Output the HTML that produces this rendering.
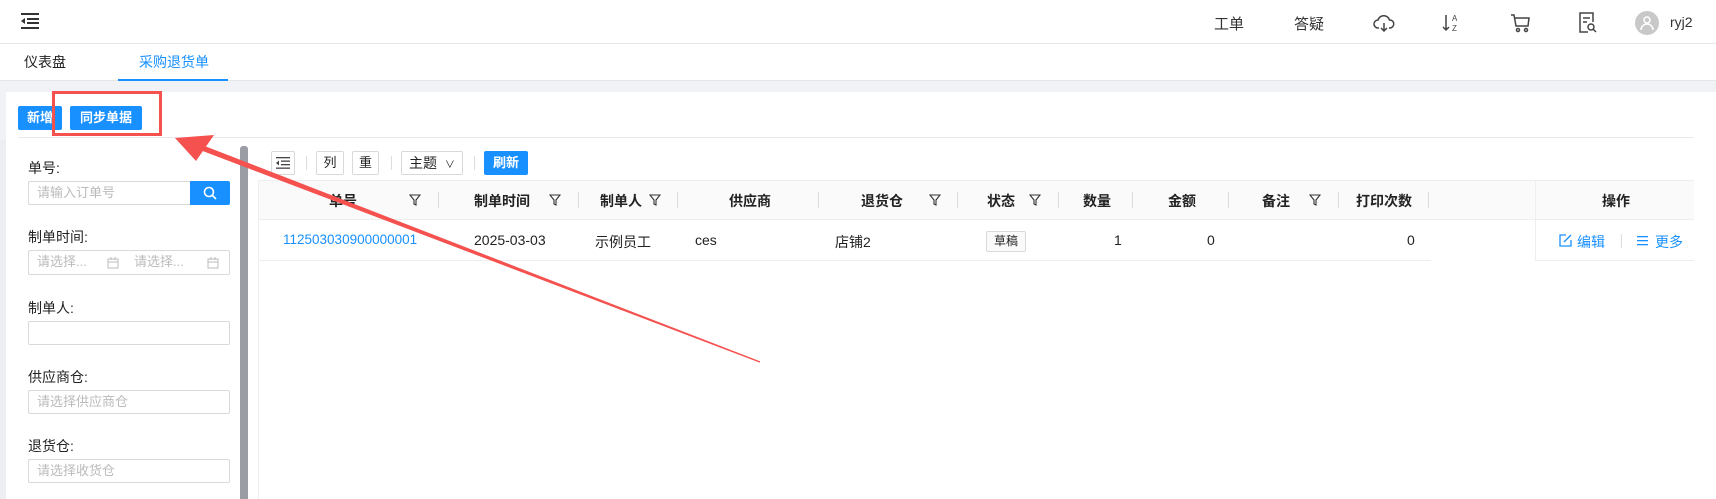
<!DOCTYPE html>
<html><head><meta charset="utf-8"><style>
*{box-sizing:border-box;margin:0;padding:0}
body{width:1716px;height:499px;overflow:hidden;background:#f0f2f5;font-family:"Liberation Sans","Noto Sans CJK SC",sans-serif;font-size:14px;color:#222;position:relative}
.a{position:absolute}
.hdr{left:0;top:0;width:1716px;height:43px;background:#fff;box-shadow:0 1px 3px rgba(0,0,0,.08)}
.tabs{left:0;top:44px;width:1716px;height:37px;background:#fff;border-bottom:1px solid #e4e6ea}
.panel{left:6px;top:92px;width:1710px;height:407px;background:#fff}
.btn{position:absolute;background:#1890ff;color:#fff;font-size:13px;font-weight:bold;text-align:center;line-height:24px;border-radius:2px}
.lbl{position:absolute;left:28px;font-size:14px;color:#222}
.inp{position:absolute;left:28px;width:202px;height:24px;border:1px solid #d9d9d9;border-radius:2px;color:#bbb;font-size:13px;line-height:22px;padding-left:8px}
.tb{position:absolute;top:151px;height:24px;border:1px solid #d9d9d9;border-radius:2px;font-size:13px;text-align:center;line-height:22px;background:#fff}
.sep{position:absolute;width:1px;background:#ddd}
.th{position:absolute;top:191px;font-weight:bold;font-size:14px}
.td{position:absolute;top:232px;font-size:14px}
.fl{position:absolute;top:194px}
</style></head><body>
<div class="a hdr"></div>
<svg class="a" style="left:21px;top:13px" width="19" height="16" viewBox="0 0 19 16"><g fill="#333"><rect x="0" y="0" width="18" height="2"/><rect x="6" y="5" width="12" height="2"/><rect x="6" y="9" width="12" height="2"/><rect x="0" y="14" width="18" height="2"/><path d="M4 5 L0 8 L4 11Z"/></g></svg>
<div class="a" style="left:1214px;top:13px;font-size:15px;color:#333">工单</div>
<div class="a" style="left:1294px;top:13px;font-size:15px;color:#333">答疑</div>
<svg class="a" style="left:1373px;top:15px" width="22" height="17" viewBox="0 0 22 17" fill="none" stroke="#444" stroke-width="1.5"><path d="M6 13H5a4 4 0 0 1 0-8 6 6 0 0 1 11.5 0A4 4 0 0 1 17 13h-1"/><path d="M11 8v8M8 13l3 3 3-3"/></svg>
<svg class="a" style="left:1442px;top:13px" width="20" height="20" viewBox="0 0 20 20"><path d="M4 2v15M1 14l3 3 3-3" stroke="#444" stroke-width="1.5" fill="none"/><text x="10" y="8" font-size="8" font-family="Liberation Sans" fill="#444">A</text><text x="10" y="18" font-size="8" font-family="Liberation Sans" fill="#444">Z</text></svg>
<svg class="a" style="left:1510px;top:14px" width="21" height="19" viewBox="0 0 21 19" fill="none" stroke="#444" stroke-width="1.5"><path d="M1 1h3l2 11h12l1-8H5"/><circle cx="8" cy="16" r="1.5"/><circle cx="16" cy="16" r="1.5"/></svg>
<svg class="a" style="left:1578px;top:12px" width="20" height="22" viewBox="0 0 20 22" fill="none" stroke="#444" stroke-width="1.5"><path d="M10 20H2V1h13v9"/><path d="M5 6h7M5 10h4"/><circle cx="13" cy="15" r="3"/><path d="M15 17l3 3"/></svg>
<div class="a" style="left:1635px;top:11px;width:24px;height:24px;border-radius:50%;background:#c8c8c8"></div>
<svg class="a" style="left:1640px;top:15px" width="14" height="16" viewBox="0 0 14 16" fill="none" stroke="#fff" stroke-width="1.5"><circle cx="7" cy="5" r="3"/><path d="M1 15a6 6 0 0 1 12 0"/></svg>
<div class="a" style="left:1670px;top:14px;font-size:14px;color:#333">ryj2</div>

<div class="a tabs"></div>
<div class="a" style="left:24px;top:52px;font-size:14px;color:#222">仪表盘</div>
<div class="a" style="left:139px;top:52px;font-size:14px;color:#1890ff">采购退货单</div>
<div class="a" style="left:118px;top:79px;width:110px;height:2px;background:#1890ff"></div>

<div class="a panel"></div>
<div class="btn" style="left:18px;top:106px;width:44px">新增</div>
<div class="btn" style="left:70px;top:106px;width:72px">同步单据</div>
<div class="a" style="left:18px;top:137px;width:1676px;height:1px;background:#e8e8e8"></div>
<div class="a" style="left:0;top:140px;width:6px;height:359px;background:#eceef2"></div>

<div class="lbl" style="top:158px">单号:</div>
<div class="inp" style="top:181px;width:163px">请输入订单号</div>
<div class="a" style="left:190px;top:181px;width:40px;height:24px;background:#1890ff;border-radius:0 2px 2px 0"></div>
<svg class="a" style="left:203px;top:186px" width="14" height="14" viewBox="0 0 14 14" fill="none" stroke="#fff" stroke-width="1.6"><circle cx="6" cy="6" r="4.5"/><path d="M9.5 9.5L13 13"/></svg>
<div class="lbl" style="top:227px">制单时间:</div>
<div class="inp" style="top:250px;height:25px"><span style="position:absolute;left:8px">请选择...</span><span style="position:absolute;left:105px">请选择...</span>
<svg style="position:absolute;left:78px;top:6px" width="12" height="12" viewBox="0 0 12 12" fill="none" stroke="#bbb"><rect x="1" y="2" width="10" height="9"/><path d="M1 5h10M4 0v3M8 0v3"/></svg>
<svg style="position:absolute;left:178px;top:6px" width="12" height="12" viewBox="0 0 12 12" fill="none" stroke="#bbb"><rect x="1" y="2" width="10" height="9"/><path d="M1 5h10M4 0v3M8 0v3"/></svg></div>
<div class="lbl" style="top:298px">制单人:</div>
<div class="inp" style="top:321px"></div>
<div class="lbl" style="top:367px">供应商仓:</div>
<div class="inp" style="top:390px">请选择供应商仓</div>
<div class="lbl" style="top:436px">退货仓:</div>
<div class="inp" style="top:459px">请选择收货仓</div>
<div class="a" style="left:240px;top:146px;width:8px;height:353px;background:#9a9da3;border-radius:3px 3px 0 0"></div>

<div class="tb" style="left:271px;width:24px"><svg width="14" height="12" viewBox="0 0 14 12" style="margin-top:5px"><g fill="#444"><rect x="0" y="0" width="14" height="1.3"/><rect x="5" y="3.5" width="9" height="1.3"/><rect x="5" y="7" width="9" height="1.3"/><rect x="0" y="10.5" width="14" height="1.3"/><path d="M3 3.5L0 6l3 2.5Z"/></g></svg></div>
<div class="sep" style="left:306px;top:156px;height:14px"></div>
<div class="tb" style="left:316px;width:28px">列</div>
<div class="tb" style="left:352px;width:27px">重</div>
<div class="sep" style="left:391px;top:156px;height:14px"></div>
<div class="tb" style="left:401px;width:62px;text-align:left;padding-left:7px;font-size:14px">主题 <span style="font-size:10px;margin-left:4px">&#8744;</span></div>
<div class="sep" style="left:474px;top:156px;height:14px"></div>
<div class="btn" style="left:484px;top:151px;width:44px">刷新</div>

<div class="a" style="left:258px;top:180px;width:1px;height:319px;background:#eee"></div>
<div class="a" style="left:259px;top:180px;width:1435px;height:40px;background:#fafafa;border-top:1px solid #eee;border-bottom:1px solid #eee"></div>
<div class="a" style="left:259px;top:260px;width:1172px;height:1px;background:#eee"></div>
<div class="a" style="left:1535px;top:180px;width:1px;height:81px;background:#eee"></div>
<div class="a" style="left:1536px;top:260px;width:158px;height:1px;background:#eee"></div>

<div class="th" style="left:329px">单号</div>
<div class="th" style="left:474px">制单时间</div>
<div class="th" style="left:600px">制单人</div>
<div class="th" style="left:729px">供应商</div>
<div class="th" style="left:861px">退货仓</div>
<div class="th" style="left:987px">状态</div>
<div class="th" style="left:1083px">数量</div>
<div class="th" style="left:1168px">金额</div>
<div class="th" style="left:1262px">备注</div>
<div class="th" style="left:1356px">打印次数</div>
<div class="th" style="left:1602px">操作</div>
<svg class="fl" style="left:409px" width="12" height="12" viewBox="0 0 12 12"><path d="M1 1h10L7 6v5L5 10V6Z" fill="none" stroke="#333" stroke-width="1.1"/></svg>
<svg class="fl" style="left:549px" width="12" height="12" viewBox="0 0 12 12"><path d="M1 1h10L7 6v5L5 10V6Z" fill="none" stroke="#333" stroke-width="1.1"/></svg>
<svg class="fl" style="left:649px" width="12" height="12" viewBox="0 0 12 12"><path d="M1 1h10L7 6v5L5 10V6Z" fill="none" stroke="#333" stroke-width="1.1"/></svg>
<svg class="fl" style="left:929px" width="12" height="12" viewBox="0 0 12 12"><path d="M1 1h10L7 6v5L5 10V6Z" fill="none" stroke="#333" stroke-width="1.1"/></svg>
<svg class="fl" style="left:1029px" width="12" height="12" viewBox="0 0 12 12"><path d="M1 1h10L7 6v5L5 10V6Z" fill="none" stroke="#333" stroke-width="1.1"/></svg>
<svg class="fl" style="left:1309px" width="12" height="12" viewBox="0 0 12 12"><path d="M1 1h10L7 6v5L5 10V6Z" fill="none" stroke="#333" stroke-width="1.1"/></svg>
<div class="sep" style="left:438px;top:192px;height:16px"></div>
<div class="sep" style="left:578px;top:192px;height:16px"></div>
<div class="sep" style="left:677px;top:192px;height:16px"></div>
<div class="sep" style="left:818px;top:192px;height:16px"></div>
<div class="sep" style="left:957px;top:192px;height:16px"></div>
<div class="sep" style="left:1058px;top:192px;height:16px"></div>
<div class="sep" style="left:1132px;top:192px;height:16px"></div>
<div class="sep" style="left:1228px;top:192px;height:16px"></div>
<div class="sep" style="left:1338px;top:192px;height:16px"></div>
<div class="sep" style="left:1428px;top:192px;height:16px"></div>

<div class="td" style="left:283px;color:#1890ff;font-size:13.5px">112503030900000001</div>
<div class="td" style="left:474px">2025-03-03</div>
<div class="td" style="left:595px">示例员工</div>
<div class="td" style="left:695px">ces</div>
<div class="td" style="left:835px">店铺2</div>
<div class="a" style="left:986px;top:231px;width:40px;height:21px;border:1px solid #d9d9d9;border-radius:2px;background:#fafafa;font-size:12px;text-align:center;line-height:19px">草稿</div>
<div class="td" style="left:1114px">1</div>
<div class="td" style="left:1207px">0</div>
<div class="td" style="left:1407px">0</div>
<svg class="a" style="left:1559px;top:234px" width="13" height="13" viewBox="0 0 13 13" fill="none" stroke="#1890ff" stroke-width="1.3"><path d="M7 1H1v11h11V6"/><path d="M5 8l7-7"/></svg>
<div class="td" style="left:1577px;color:#1890ff">编辑</div>
<div class="sep" style="left:1621px;top:234px;height:14px"></div>
<svg class="a" style="left:1637px;top:235px" width="11" height="11" viewBox="0 0 11 11" fill="#1890ff"><rect y="1" width="11" height="1.3"/><rect y="5" width="11" height="1.3"/><rect y="9" width="11" height="1.3"/></svg>
<div class="td" style="left:1655px;color:#1890ff">更多</div>

<div class="a" style="left:52px;top:91px;width:110px;height:45px;border:3px solid #f4514f"></div>
<svg class="a" style="left:0;top:0" width="1716" height="499"><polygon points="760.3,361.4 202,145 200,150 759.7,362.6" fill="#f4514f"/><polygon points="175,138 214,135 196,161" fill="#f4514f"/></svg>
</body></html>
